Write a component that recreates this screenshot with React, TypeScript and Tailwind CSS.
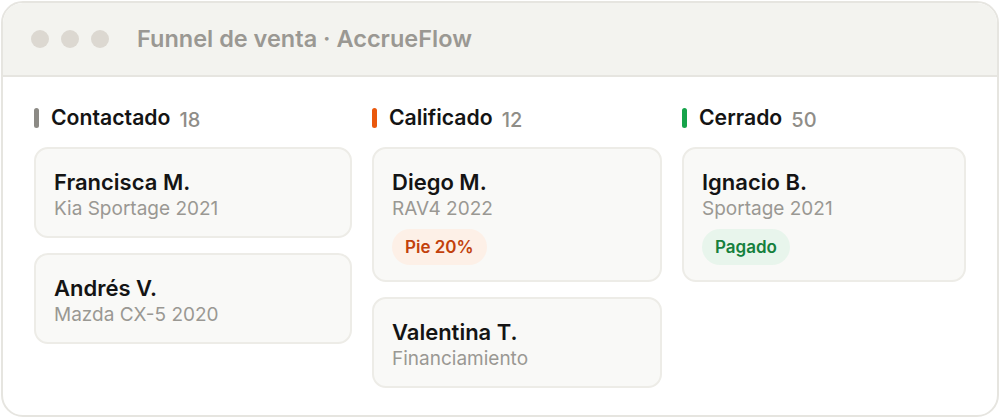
import React from 'react';

type Card = { name: string; sub: string; badge?: { label: string; tone: 'orange' | 'green' } };
type Column = { title: string; count: number; bar: string; width: string; cards: Card[] };

const columns: Column[] = [
  {
    title: 'Contactado',
    count: 18,
    bar: 'bg-[#8c8a85]',
    width: 'w-[318px]',
    cards: [
      { name: 'Francisca M.', sub: 'Kia Sportage 2021' },
      { name: 'Andrés V.', sub: 'Mazda CX-5 2020' },
    ],
  },
  {
    title: 'Calificado',
    count: 12,
    bar: 'bg-[#ea580c]',
    width: 'w-[290px]',
    cards: [
      { name: 'Diego M.', sub: 'RAV4 2022', badge: { label: 'Pie 20%', tone: 'orange' } },
      { name: 'Valentina T.', sub: 'Financiamiento' },
    ],
  },
  {
    title: 'Cerrado',
    count: 50,
    bar: 'bg-[#16a34a]',
    width: 'w-[284px]',
    cards: [{ name: 'Ignacio B.', sub: 'Sportage 2021', badge: { label: 'Pagado', tone: 'green' } }],
  },
];

function DealCard({ card }: { card: Card }) {
  return (
    <div className="rounded-[14px] border-2 border-[#edece7] bg-[#f9f9f7] px-[18px] pt-[20px] pb-[15px]">
      <div className="text-[22px] leading-[27px] font-semibold text-[#141414]">{card.name}</div>
      <div className="text-[19px] leading-[25px] text-[#9a9893]">{card.sub}</div>
      {card.badge && (
        <div className="mt-[8px] flex">
          <span
            className={
              card.badge.tone === 'orange'
                ? 'h-[36px] rounded-full bg-[#fdf0e7] px-[13px] text-[17px] leading-[36px] font-semibold text-[#c2410c]'
                : 'h-[36px] rounded-full bg-[#e8f5ec] px-[13px] text-[17px] leading-[36px] font-semibold text-[#15803d]'
            }
          >
            {card.badge.label}
          </span>
        </div>
      )}
    </div>
  );
}

export default function App() {
  return (
    <div className="h-[418px] w-[1000px] bg-white p-[1px] font-['Inter','Noto_Sans',sans-serif]">
      <div className="h-[416px] w-[998px] overflow-hidden rounded-[22px] border-2 border-[#e6e5e0] bg-white">
        <div className="flex h-[74px] items-center gap-[12px] border-b-2 border-[#e6e5e0] bg-[#f3f3ef] pl-[28px]">
          <span className="h-[18px] w-[18px] rounded-full bg-[#dcd8d1]" />
          <span className="h-[18px] w-[18px] rounded-full bg-[#dcd8d1]" />
          <span className="h-[18px] w-[18px] rounded-full bg-[#dcd8d1]" />
          <span className="ml-[16px] text-[23.5px] font-semibold text-[#9a9893]">
            Funnel de venta · AccrueFlow
          </span>
        </div>
        <div className="flex gap-[20px] pl-[31px] pt-[28px]">
          {columns.map((col) => (
            <div key={col.title} className={`flex flex-col ${col.width}`}>
              <div className="flex h-[26px] items-center">
                <span className={`h-[20px] w-[5px] rounded-full ${col.bar}`} />
                <span className="ml-[12px] text-[21.2px] font-semibold text-[#141414]">{col.title}</span>
                <span className="ml-[9px] mt-[3px] text-[20px] font-medium text-[#8f8d88]">{col.count}</span>
              </div>
              <div className="mt-[16px] flex flex-col gap-[15px]">
                {col.cards.map((c) => (
                  <DealCard key={c.name} card={c} />
                ))}
              </div>
            </div>
          ))}
        </div>
      </div>
    </div>
  );
}
